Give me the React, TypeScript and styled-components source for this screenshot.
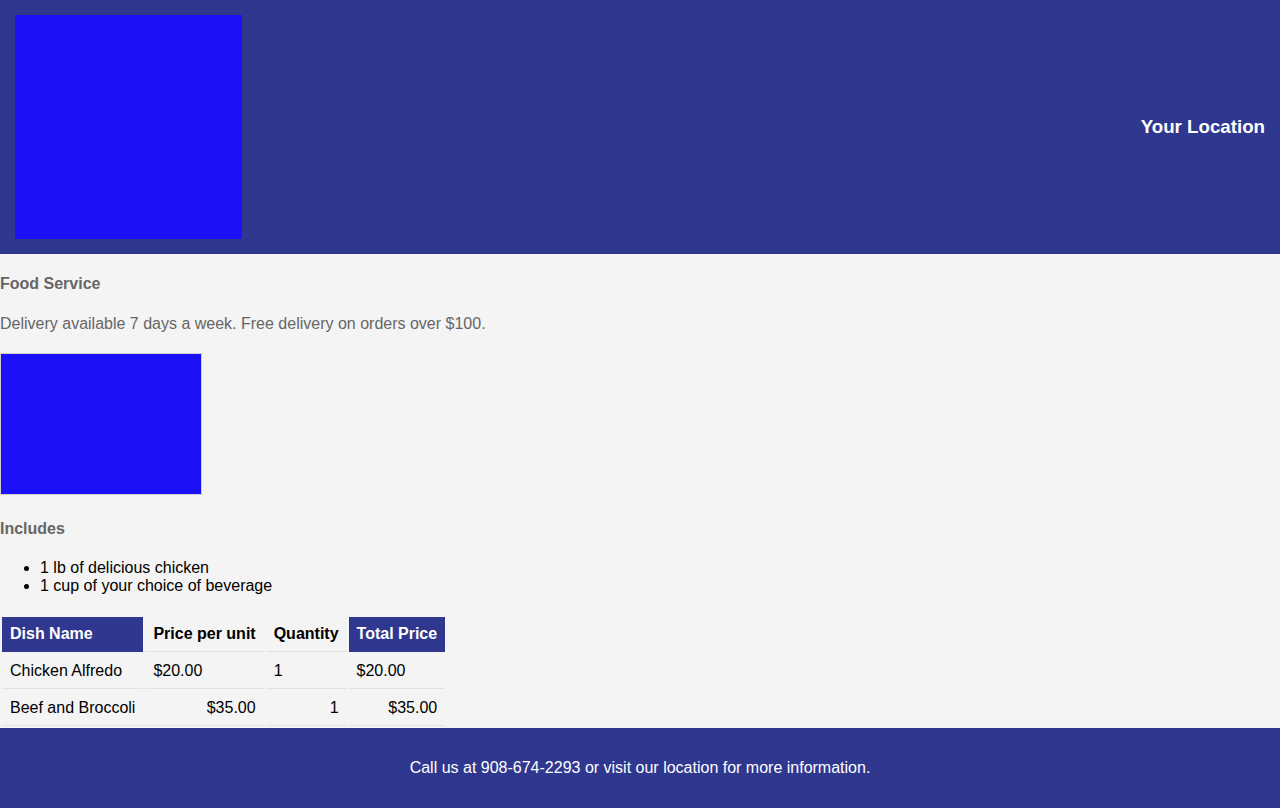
import styled, { createGlobalStyle } from "styled-components";

const GlobalStyle = createGlobalStyle`
  body {
    margin: 0;
    background: #f4f4f4;
    font-family: "Liberation Sans", Arial, sans-serif;
    font-size: 16px;
    color: #000;
  }
`;

interface Dish {
  name: string;
  price: string;
  qty: string;
  total: string;
  alignRight?: boolean;
}

const dishes: Dish[] = [
  { name: "Chicken Alfredo", price: "$20.00", qty: "1", total: "$20.00" },
  {
    name: "Beef and Broccoli",
    price: "$35.00",
    qty: "1",
    total: "$35.00",
    alignRight: true,
  },
];

const App = () => {
  return (
    <>
      <GlobalStyle />
      <Header>
        <Logo />
        <LocationTitle>Your Location</LocationTitle>
      </Header>

      <Main>
        <SectionTitle>Food Service</SectionTitle>
        <Blurb>
          Delivery available 7 days a week. Free delivery on orders over $100.
        </Blurb>
        <DishPhoto />
        <SectionTitle $spaced>Includes</SectionTitle>
        <IncludesList>
          <li>1 lb of delicious chicken</li>
          <li>1 cup of your choice of beverage</li>
        </IncludesList>

        <MenuTable>
          <thead>
            <tr>
              <HeadCell $accent>Dish Name</HeadCell>
              <HeadCell>Price per unit</HeadCell>
              <HeadCell>Quantity</HeadCell>
              <HeadCell $accent>Total Price</HeadCell>
            </tr>
          </thead>
          <tbody>
            {dishes.map((dish) => (
              <tr key={dish.name}>
                <Cell>{dish.name}</Cell>
                <Cell $right={dish.alignRight}>{dish.price}</Cell>
                <Cell $right={dish.alignRight}>{dish.qty}</Cell>
                <Cell $right={dish.alignRight}>{dish.total}</Cell>
              </tr>
            ))}
          </tbody>
        </MenuTable>
      </Main>

      <Footer>
        Call us at 908-674-2293 or visit our location for more information.
      </Footer>
    </>
  );
};

export default App;

const Header = styled.header`
  display: flex;
  align-items: center;
  justify-content: space-between;
  padding: 15px;
  background: #30378f;
`;

const Logo = styled.div`
  width: 227px;
  height: 224px;
  background: #1c10f6;
`;

const LocationTitle = styled.h3`
  margin: 0;
  font-size: 18.72px;
  font-weight: bold;
  color: #fff;
`;

const Main = styled.main`
  display: flex;
  flex-direction: column;
  align-items: flex-start;
`;

const SectionTitle = styled.h4<{ $spaced?: boolean }>`
  margin: ${(p) => (p.$spaced ? "25px" : "21px")} 0 0;
  font-size: 16px;
  line-height: 18px;
  font-weight: bold;
  color: #666;
`;

const Blurb = styled.p`
  margin: 22px 0 0;
  line-height: 18px;
  color: #666;
`;

const DishPhoto = styled.div`
  margin-top: 20px;
  width: 200px;
  height: 140px;
  background: #1c10f6;
  border: 1px solid #d0d0d0;
`;

const IncludesList = styled.ul`
  margin: 21px 0 0;
  padding-left: 40px;
  line-height: 18px;
`;

const MenuTable = styled.table`
  margin-top: 20px;
  border-spacing: 2px;
`;

const HeadCell = styled.th<{ $accent?: boolean }>`
  padding: 8px;
  line-height: 18px;
  text-align: left;
  font-weight: bold;
  background: ${(p) => (p.$accent ? "#30378f" : "transparent")};
  color: ${(p) => (p.$accent ? "#fff" : "#000")};
  border-bottom: 1px solid ${(p) => (p.$accent ? "#30378f" : "#e2e2e2")};
`;

const Cell = styled.td<{ $right?: boolean }>`
  padding: 8px;
  line-height: 18px;
  text-align: ${(p) => (p.$right ? "right" : "left")};
  border-bottom: 1px solid #e2e2e2;
`;

const Footer = styled.footer`
  display: flex;
  align-items: center;
  justify-content: center;
  height: 80px;
  background: #30378f;
  color: #fff;
`;
